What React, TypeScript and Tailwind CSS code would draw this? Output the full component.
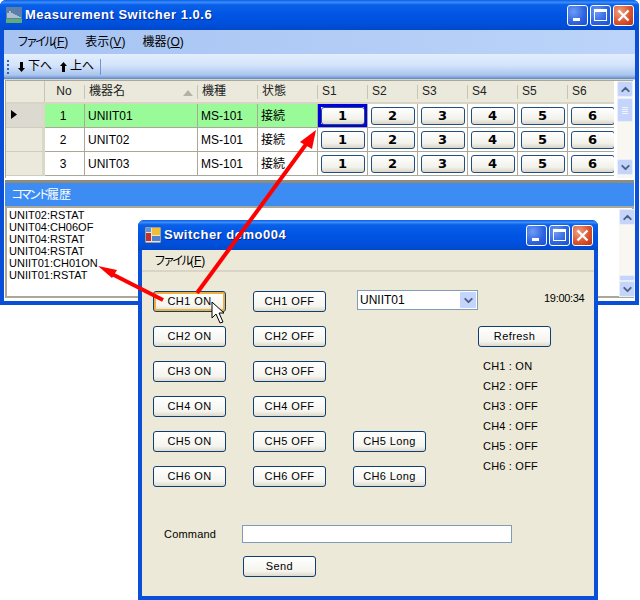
import React from 'react';
import { ChevronUp, ChevronDown } from 'lucide-react';

const uiFont = '[font-family:"Liberation_Sans","Noto_Sans_CJK_JP",sans-serif]';

const TITLE_BAR =
  'bg-[linear-gradient(180deg,#0a5fe8_0%,#3a8cf8_8%,#0a60e8_16%,#0054e3_50%,#0050dc_80%,#0048c8_100%)]';

const WinButton = ({ kind }: { kind: 'min' | 'max' | 'close' }) => (
  <div
    className={`w-[21px] h-[21px] rounded-[3px] border border-white flex items-center justify-center ${
      kind === 'close'
        ? 'bg-[radial-gradient(circle_at_30%_30%,#f0a080,#d8502c_60%,#b83010)]'
        : 'bg-[radial-gradient(circle_at_30%_30%,#6f9cf4,#2c62e0_60%,#1f4fd0)]'
    }`}
  >
    {kind === 'min' && <div className="w-[7px] h-[3px] bg-white mt-[9px] mr-[3px]" />}
    {kind === 'max' && <div className="w-[13px] h-[12px] border border-white border-t-[3px]" />}
    {kind === 'close' && (
      <svg width="13" height="13" viewBox="0 0 13 13">
        <path d="M1.5 1.5 L11.5 11.5 M11.5 1.5 L1.5 11.5" stroke="#fff" strokeWidth="2.4" />
      </svg>
    )}
  </div>
);

const TitleBar = ({ icon, title }: { icon: React.ReactNode; title: string }) => (
  <div className={`h-[30px] ${TITLE_BAR} flex items-center px-[5px] rounded-t-[6px]`}>
    {icon}
    <span className="ml-[3px] text-white font-bold text-[13px] tracking-[0.5px] [text-shadow:1px_1px_0_#0a2a90]">
      {title}
    </span>
    <div className="ml-auto flex gap-[2px]">
      <WinButton kind="min" />
      <WinButton kind="max" />
      <WinButton kind="close" />
    </div>
  </div>
);

const ScrollArrow = ({ up }: { up?: boolean }) => (
  <div className="w-[16px] h-[16px] rounded-[2px] border border-[#e8eefc] bg-[#c4d4fa] flex items-center justify-center text-[#4d6185]">
    {up ? <ChevronUp size={13} strokeWidth={3.5} /> : <ChevronDown size={13} strokeWidth={3.5} />}
  </div>
);

// MS UI Gothic's kana are narrower than Noto's
const Kana = ({ children }: { children: string }) => <span className="tracking-[-3px]">{children}</span>;

const headers = ['No', '機器名', '機種', '状態', 'S1', 'S2', 'S3', 'S4', 'S5', 'S6'];
const rows = [
  { no: 1, name: 'UNIIT01' },
  { no: 2, name: 'UNIT02' },
  { no: 3, name: 'UNIT03' },
];
const gridCols = 'grid-cols-[39px_40px_113px_60px_60px_50px_50px_50px_50px_50px_50px]';

const SwitchButton = ({ label }: { label: number }) => (
  <div className="w-[44px] h-[18px] rounded-[3px] border border-[#1f4f80] bg-[linear-gradient(180deg,#ffffff,#f2f1ea_70%,#d8d6cb)] flex items-center justify-center text-[13px] font-bold text-black [font-family:'DejaVu_Sans',sans-serif]">
    {label}
  </div>
);

const DataGrid = () => (
  <div className="h-[98px] ml-[5px] mr-[6px] flex overflow-hidden bg-white border-t border-l border-[#aca899]">
    <div className="w-[613px] overflow-hidden">
      <div className={`grid ${gridCols} h-[23px] bg-[#ebe9dc] border-b-2 border-[#d8d5c5] text-[12px] text-[#222]`}>
        <div className="border-r border-[#c8c5b5]" />
        {headers.map((h, i) => (
          <div key={h} className={`relative flex items-center pb-[2px] ${i === 0 ? 'justify-center pr-[2px]' : 'pl-[4px]'}`}>
            {h}
            {i === 1 && (
              <svg className="absolute right-[5px] top-[9px]" width="10" height="6" viewBox="0 0 10 6">
                <path d="M5 0 L10 6 L0 6 Z" fill="#b4b2a4" />
              </svg>
            )}
            <div className="absolute right-0 top-[4px] h-[14px] w-px bg-[#c8c5b5]" />
          </div>
        ))}
      </div>
      {rows.map((r, ri) => (
        <div key={r.no} className={`grid ${gridCols} h-[24px] text-[12px] text-black`}>
          <div
            className={`flex items-center pl-[5px] pb-[3px] border-b border-[#d0cdbd] border-r-[3px] border-r-[#dbd8c8] ${
              ri === 0 ? 'bg-[#dcdad0]' : 'bg-[#ebe9dc]'
            }`}
          >
            {ri === 0 && (
              <svg width="6" height="9" viewBox="0 0 6 9">
                <path d="M0 0 L6 4.5 L0 9 Z" fill="#000" />
              </svg>
            )}
          </div>
          {[String(r.no), r.name, 'MS-101', '接続'].map((v, i) => (
            <div
              key={i}
              className={`flex items-center border-b border-r border-[#aca899] ${i === 0 ? 'justify-center pr-[3px]' : 'pl-[3px]'} ${
                ri === 0 ? 'bg-[#98fb98]' : ''
              }`}
            >
              {v}
            </div>
          ))}
          {[1, 2, 3, 4, 5, 6].map((n) => (
            <div
              key={n}
              className={`flex items-center justify-center border-b border-r border-[#aca899] ${
                ri === 0 && n === 1 ? 'shadow-[inset_0_0_0_3px_#0000e0]' : ''
              }`}
            >
              <SwitchButton label={n} />
            </div>
          ))}
        </div>
      ))}
    </div>
    <div className="w-[16px] ml-[3px] bg-[#f8f7f2] flex flex-col justify-between">
      <div>
        <ScrollArrow up />
        <div className="mt-[1px] h-[24px] rounded-[2px] border border-[#e8eefc] bg-[#c4d4fa] flex flex-col items-center justify-center gap-px">
          <div className="w-[6px] h-px bg-[#eef3ff]" />
          <div className="w-[6px] h-px bg-[#eef3ff]" />
          <div className="w-[6px] h-px bg-[#eef3ff]" />
          <div className="w-[6px] h-px bg-[#eef3ff]" />
        </div>
      </div>
      <div className="mb-[3px]">
        <ScrollArrow />
      </div>
    </div>
  </div>
);

const historyLines = [
  'UNIT02:RSTAT',
  'UNIT04:CH06OF',
  'UNIT04:RSTAT',
  'UNIT04:RSTAT',
  'UNIIT01:CH01ON',
  'UNIIT01:RSTAT',
];

const ToolArrow = ({ up }: { up?: boolean }) => (
  <svg width="7" height="10" viewBox="0 0 7 10">
    <path
      d={up ? 'M3.5 0 L7 4 L5 4 L5 10 L2 10 L2 4 L0 4 Z' : 'M3.5 10 L7 6 L5 6 L5 0 L2 0 L2 6 L0 6 Z'}
      fill="#000"
    />
  </svg>
);

const MainWindow = () => (
  <div className="absolute left-0 top-0 w-[639px] h-[305px] flex flex-col bg-[#0a4fd8] rounded-t-[6px]">
    <TitleBar
      title="Measurement Switcher 1.0.6"
      icon={
        <svg width="16" height="16" viewBox="0 0 16 16" className="ml-[1px]">
          <rect width="16" height="16" fill="#dfe8f0" />
          <rect y="0" width="16" height="12" fill="#5a7fa8" />
          <path d="M2 11V6M4 11V4M6 11V6M8 11V7M10 11V8M12 11V9M14 11V10" stroke="#fff" strokeWidth="1" />
          <rect y="12" width="16" height="4" fill="#5fae70" />
        </svg>
      }
    />
    <div className="flex-1 mx-[4px] mb-[4px] flex flex-col bg-white overflow-hidden">
      <div className="h-[24px] bg-[linear-gradient(90deg,#a6c3f2,#bcd4f9)] flex items-center gap-[17px] pl-[13px] text-[12px] text-black">
        <span><Kana>ファイル</Kana>(<u>F</u>)</span>
        <span>表示(<u>V</u>)</span>
        <span>機器(<u>O</u>)</span>
      </div>
      <div className="h-[25px] bg-[linear-gradient(180deg,#e3eefd,#d4e4fb_45%,#a9c4ec_85%,#5b88cc)] flex items-center text-[12px] text-black">
        <div className="ml-[3px] flex flex-col gap-[2px]">
          <div className="w-[2px] h-[2px] bg-[#2f5fb0]" />
          <div className="w-[2px] h-[2px] bg-[#2f5fb0]" />
          <div className="w-[2px] h-[2px] bg-[#2f5fb0]" />
          <div className="w-[2px] h-[2px] bg-[#2f5fb0]" />
        </div>
        <span className="ml-[9px]"><ToolArrow /></span>
        <span className="ml-[3px] mb-[2px]">下へ</span>
        <span className="ml-[8px]"><ToolArrow up /></span>
        <span className="ml-[3px] mb-[2px]">上へ</span>
        <div className="ml-[6px] w-px h-[16px] bg-[#6f95cf]" />
      </div>
      <div className="-mx-[4px] h-[1px] bg-[#d8d5c5]" />
      <div className="-mx-[4px]">
        <DataGrid />
      </div>
      <div className="-mx-[4px] flex-1 flex flex-col mt-[2px]">
        <div className="h-[3px] bg-[#8f8c7c] mx-[5px]" />
        <div className="mx-[5px] h-[23px] bg-[#3c8cf4] flex items-center pl-[6px] text-[12px] text-white">
          <Kana>コマンド</Kana>履歴
        </div>
        <div className="mx-[5px] mb-[3px] flex-1 border-2 border-[#aca899] pt-px pl-[2px] text-[11px] leading-[12px] text-black">
          {historyLines.map((l, i) => (
            <div key={i}>{l}</div>
          ))}
        </div>
      </div>
    </div>
  </div>
);

const XpButton = ({ label, focused, className }: { label: string; focused?: boolean; className?: string }) => (
  <div
    className={`w-[73px] h-[21px] pb-px rounded-[3px] border border-[#0f3f70] flex items-center justify-center text-[11px] tracking-[0.4px] text-black bg-[linear-gradient(180deg,#ffffff,#f5f4ee_75%,#dcd9cc)] ${
      focused ? 'shadow-[inset_0_0_0_2px_#f0b040]' : ''
    } ${className ?? ''}`}
  >
    {label}
  </div>
);

const channels = [1, 2, 3, 4, 5, 6];
const states = ['CH1 : ON', 'CH2 : OFF', 'CH3 : OFF', 'CH4 : OFF', 'CH5 : OFF', 'CH6 : OFF'];

const SwitcherWindow = () => (
  <div className="absolute left-[138px] top-[220px] w-[460px] h-[380px] flex flex-col bg-[#0a4fd8] rounded-t-[6px]">
    <TitleBar
      title="Switcher demo004"
      icon={
        <svg width="16" height="16" viewBox="0 0 16 16" className="ml-[2px]">
          <rect x="0" y="0" width="16" height="16" fill="#e8e4d8" stroke="#555" />
          <rect x="1" y="6" width="5" height="8" fill="#c03030" />
          <rect x="7" y="1" width="8" height="7" fill="#f0c030" />
          <rect x="7" y="9" width="8" height="5" fill="#5080d0" />
          <rect x="1" y="1" width="5" height="4" fill="#6090e0" />
        </svg>
      }
    />
    <div className="flex-1 mx-[4px] mb-[4px] flex flex-col bg-[#ece9d8] text-[11px] text-black">
      <div className="h-[22px] border-b-2 border-[#d8d5c8] flex items-center pl-[12px] pt-[2px] text-[12px]">
        <Kana>ファイル</Kana>(<u>F</u>)
      </div>
      <div className="flex pl-[11px] pt-[19px]">
        <div className="w-[100px] flex flex-col gap-[14px]">
          {channels.map((c) => (
            <XpButton key={c} label={`CH${c} ON`} focused={c === 1} />
          ))}
        </div>
        <div className="w-[100px] flex flex-col gap-[14px]">
          {channels.map((c) => (
            <XpButton key={c} label={`CH${c} OFF`} />
          ))}
        </div>
        <div className="w-[125px] flex flex-col">
          <div className="ml-[4px] -mt-[1px] w-[121px] h-[20px] bg-white border border-[#7f9db9] flex items-center pl-[2px] text-[12px]">
            UNIIT01
            <div className="ml-auto mr-px w-[16px] h-[16px] bg-[#c4d4fa] flex items-center justify-center text-[#4d6185] rounded-[1px]">
              <ChevronDown size={13} strokeWidth={3.5} />
            </div>
          </div>
          <div className="mt-[121px] flex flex-col gap-[14px]">
            <XpButton label="CH5 Long" />
            <XpButton label="CH6 Long" />
          </div>
        </div>
        <div className="flex-1 relative">
          <div className="absolute left-[66px] top-[-1px] tracking-[-0.3px]">19:00:34</div>
          <XpButton label="Refresh" className="mt-[35px]" />
          <div className="ml-[5px] mt-[9px] flex flex-col tracking-[0.2px]">
            {states.map((s) => (
              <div key={s} className="h-[20px] flex items-center">
                {s}
              </div>
            ))}
          </div>
        </div>
      </div>
      <div className="mt-[38px] flex items-center pl-[22px] h-[18px]">
        <span className="w-[78px] tracking-[0.2px]">Command</span>
        <div className="w-[270px] h-[18px] bg-white border border-[#7f9db9]" />
      </div>
      <XpButton label="Send" className="ml-[101px] mt-[13px]" />
    </div>
  </div>
);

const Overlay = () => (
  <svg className="absolute left-0 top-0 pointer-events-none" width="640" height="600" viewBox="0 0 640 600">
    <path d="M197 293 L307 143" stroke="#ff0000" strokeWidth="4" fill="none" />
    <path d="M316 130 L300 142 L312 149 Z" fill="#ff0000" />
    <path d="M163 300 L108 272" stroke="#ff0000" strokeWidth="4" fill="none" />
    <path d="M98 266 L117 270 L112 278 Z" fill="#ff0000" />
    <path
      d="M212 302 L212 318 L216 314 L220 323 L223 322 L219 313 L224 313 Z"
      fill="#fff"
      stroke="#000"
      strokeWidth="1"
    />
  </svg>
);

export default function App() {
  return (
    <div className={`relative w-[640px] h-[600px] bg-white overflow-hidden ${uiFont}`}>
      <MainWindow />
      <SwitcherWindow />
      <div className="absolute left-[619px] top-[209px] w-[16px] h-[88px] bg-[#f8f7f2] flex flex-col justify-between">
        <ScrollArrow up />
        <div>
          <div className="h-[6px] rounded-[2px] bg-[#c4d4fa] border border-[#e8eefc]" />
          <ScrollArrow />
        </div>
      </div>
      <Overlay />
    </div>
  );
}
